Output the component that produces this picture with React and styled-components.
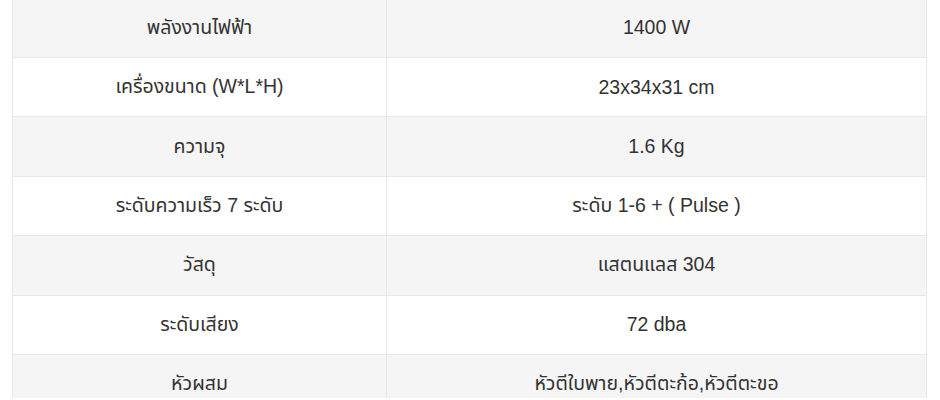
import React from 'react'
import styled, { createGlobalStyle } from 'styled-components'

const GlobalStyle = createGlobalStyle`
  body {
    margin: 0;
    background: #ffffff;
    font-family: "Liberation Sans", "Noto Sans Thai", "Noto Sans", sans-serif;
  }
`

const Page = styled.div`
  padding: 0 12px 0 12px;
  margin-top: -2.4px;
  height: 400px;
  overflow: hidden;
`

const SpecTable = styled.table`
  width: 915px;
  border-collapse: collapse;
  table-layout: fixed;
`

const Row = styled.tr`
  height: 59.4px;
  background: ${({ $striped }) => ($striped ? '#f5f5f5' : '#ffffff')};
`

const Cell = styled.td`
  box-sizing: border-box;
  width: ${({ $width }) => $width || 'auto'};
  border: 1px solid #e8e8e8;
  padding: 0 10px;
  text-align: center;
  vertical-align: middle;
  font-size: 19.5px;
  color: #333333;
`

const specs = [
  ['พลังงานไฟฟ้า', '1400 W'],
  ['เครื่องขนาด (W*L*H)', '23x34x31 cm'],
  ['ความจุ', '1.6 Kg'],
  ['ระดับความเร็ว 7 ระดับ', 'ระดับ 1-6 + ( Pulse )'],
  ['วัสดุ', 'แสตนแลส 304'],
  ['ระดับเสียง', '72 dba'],
  ['หัวผสม', 'หัวตีใบพาย,หัวตีตะก้อ,หัวตีตะขอ'],
]

function App() {
  return (
    <Page>
      <GlobalStyle />
      <SpecTable>
        <tbody>
          {specs.map(([label, value], i) => (
            <Row key={label} $striped={i % 2 === 0}>
              <Cell $width="374px">{label}</Cell>
              <Cell>{value}</Cell>
            </Row>
          ))}
        </tbody>
      </SpecTable>
    </Page>
  )
}

export default App
